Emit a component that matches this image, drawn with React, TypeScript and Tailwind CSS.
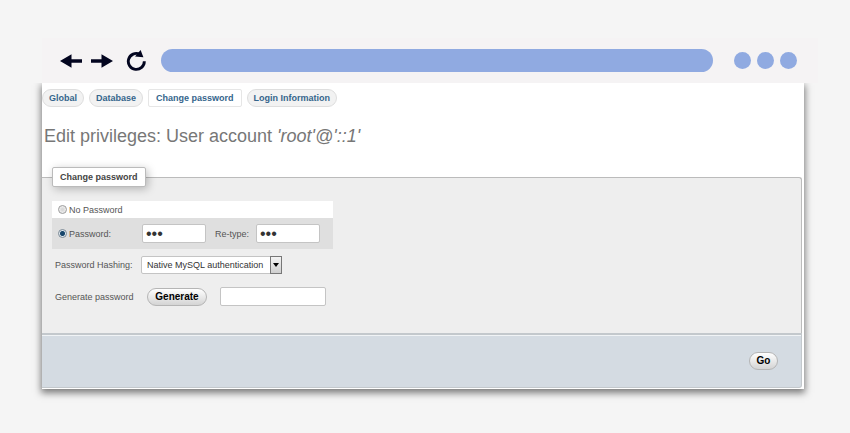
import { useState } from "react";

const tabs = ["Global", "Database", "Change password", "Login Information"];

const fieldClass =
  "h-[19px] rounded-[2px] border border-[#c4c4c4] bg-white px-[3px] text-[#333] outline-none focus:border-[#8fa9e0]";

const buttonClass =
  "h-[18px] rounded-full border border-[#b5b5b5] bg-gradient-to-b from-white to-[#d4d4d4] text-[10px] font-bold text-black";

const radioClass =
  "h-[9px] w-[9px] shrink-0 appearance-none rounded-full border border-[#9a9a9a] bg-[radial-gradient(circle,#d8d8d8_20%,#f4f4f4_80%)] checked:border-[#7c8a96] checked:bg-[radial-gradient(circle,#17466b_42%,#dfe9f0_60%)]";

function BrowserBar() {
  return (
    <header className="mr-8 ml-[42px] flex h-[45px] items-center bg-[#f5f3f4] pr-[21px] pl-[18px]">
      <button type="button" aria-label="Back">
        <svg width="22" height="14" viewBox="0 0 22 14" fill="#03051f">
          <path d="M0 7 11.500 0.200V5.300H22V8.700H11.500V13.800Z" />
        </svg>
      </button>
      <button type="button" aria-label="Forward" className="ml-[9px]">
        <svg width="22" height="14" viewBox="0 0 22 14" fill="#03051f">
          <path d="M22 7 10.500 0.200V5.300H0V8.700H10.500V13.800Z" />
        </svg>
      </button>
      <button type="button" aria-label="Reload" className="ml-[13px]">
        <svg width="20" height="22" viewBox="0 0 20 22">
          <path d="M18.300 11.200A8 8 0 1 1 13.800 4.200" fill="none" stroke="#03051f" strokeWidth="2.900" />
          <path d="M14.600 0 17.400 7.300 9 6.600Z" fill="#03051f" />
        </svg>
      </button>
      <div className="mr-[21px] ml-[15px] h-[23px] flex-1 rounded-full bg-[#90aae1]" />
      <div className="flex gap-[6px]">
        <span className="h-[17px] w-[17px] rounded-full bg-[#90aae1]" />
        <span className="h-[17px] w-[17px] rounded-full bg-[#90aae1]" />
        <span className="h-[17px] w-[17px] rounded-full bg-[#90aae1]" />
      </div>
    </header>
  );
}

export default function App() {
  const [mode, setMode] = useState("password");
  const [password, setPassword] = useState("abc");
  const [retype, setRetype] = useState("abc");
  const [generated, setGenerated] = useState("");

  function generate() {
    const value = Math.random().toString(36).slice(2, 12);
    setGenerated(value);
    setPassword(value);
    setRetype(value);
  }

  return (
    <div className="min-h-screen bg-[#f5f5f5] pt-[38px] pb-11 font-['Liberation_Sans',Arial,sans-serif] text-[9px] leading-[12px] text-[#555]">
      <BrowserBar />

      <main className="mr-[46px] ml-[42px] bg-white pr-[2px] pb-[1px] shadow-[0_3px_7px_1px_rgba(0,0,0,0.5)] [clip-path:inset(0_-20px_-20px_-20px)]">
        <nav className="flex gap-[5px] pt-[6px]">
          {tabs.map((tab) => (
            <a
              key={tab}
              href="#"
              className={
                tab === "Change password"
                  ? "flex h-[18px] items-center rounded-[2px] border border-[#e6e6e6] bg-white px-[7px] font-bold text-[#35658c]"
                  : "flex h-[18px] items-center rounded-full border border-[#dedede] bg-[#f2f2f2] px-[6px] font-bold text-[#35658c]"
              }
            >
              {tab}
            </a>
          ))}
        </nav>

        <h1 className="mt-[18px] ml-[2px] text-[18px] leading-[22px] text-[#777]">
          Edit privileges: User account <i>&apos;root&apos;@&apos;::1&apos;</i>
        </h1>

        <form onSubmit={(event) => event.preventDefault()} className="mt-5">
          <fieldset className="rounded-tr-[3px] border-t border-r border-[#bbb] bg-[#eee] pb-[27px] pl-[10px]">
            <legend className="flex h-5 items-center rounded-[2px] border border-[#bbb] bg-white px-[7px] font-bold text-[#444] shadow-[2px_2px_8px_rgba(0,0,0,0.25)]">
              Change password
            </legend>

            <div className="mt-[14px] w-[281px]">
              <div className="flex h-[17px] items-center bg-white pl-[6px]">
                <input
                  id="no-password"
                  type="radio"
                  name="mode"
                  checked={mode === "none"}
                  onChange={() => setMode("none")}
                  className={radioClass}
                />
                <label htmlFor="no-password" className="ml-[2px]">
                  No Password
                </label>
              </div>
              <div className="flex h-[31px] items-center bg-[#dfdfdf] pl-[6px]">
                <input
                  id="use-password"
                  type="radio"
                  name="mode"
                  checked={mode === "password"}
                  onChange={() => setMode("password")}
                  className={radioClass}
                />
                <label htmlFor="use-password" className="ml-[2px] w-[73px]">
                  Password:
                </label>
                <input
                  type="password"
                  aria-label="Password"
                  value={password}
                  onChange={(event) => setPassword(event.target.value)}
                  className={`${fieldClass} w-[64px] text-[16px]`}
                />
                <label htmlFor="retype" className="ml-[9px] w-[41px]">
                  Re-type:
                </label>
                <input
                  id="retype"
                  type="password"
                  value={retype}
                  onChange={(event) => setRetype(event.target.value)}
                  className={`${fieldClass} w-[64px] text-[16px]`}
                />
              </div>
            </div>

            <div className="mt-[7px] flex items-center pl-[3px]">
              <label htmlFor="hashing" className="w-[86px]">
                Password Hashing:
              </label>
              <div className="relative">
                <select
                  id="hashing"
                  className="block h-[18px] w-[141px] appearance-none rounded-[2px] border border-[#c4c4c4] bg-white pr-[14px] pl-[5px] text-[#333]"
                >
                  <option>Native MySQL authentication</option>
                  <option>SHA256 password authentication</option>
                </select>
                <span className="pointer-events-none absolute top-0 right-0 flex h-[18px] w-[12px] items-center justify-center border border-[#777] bg-gradient-to-b from-[#f4f4f4] to-[#cfcfcf]">
                  <svg width="6" height="4" viewBox="0 0 6 4">
                    <path d="M0 0H6L3 4Z" fill="#000" />
                  </svg>
                </span>
              </div>
            </div>

            <div className="mt-[13px] flex items-center pl-[3px]">
              <label htmlFor="generated" className="w-[92px]">
                Generate password
              </label>
              <button type="button" onClick={generate} className={`${buttonClass} w-[60px]`}>
                Generate
              </button>
              <input
                id="generated"
                type="text"
                value={generated}
                onChange={(event) => setGenerated(event.target.value)}
                className={`${fieldClass} ml-[13px] w-[106px]`}
              />
            </div>
          </fieldset>

          <footer className="flex h-[55px] items-center justify-end rounded-br-[3px] border-t-2 border-r border-b border-[#c3c8cc] bg-[#d4dbe2] pr-[23px] shadow-[inset_0_1px_0_#f0f3f5]">
            <button type="submit" className={`${buttonClass} w-[29px]`}>
              Go
            </button>
          </footer>
        </form>
      </main>
    </div>
  );
}
